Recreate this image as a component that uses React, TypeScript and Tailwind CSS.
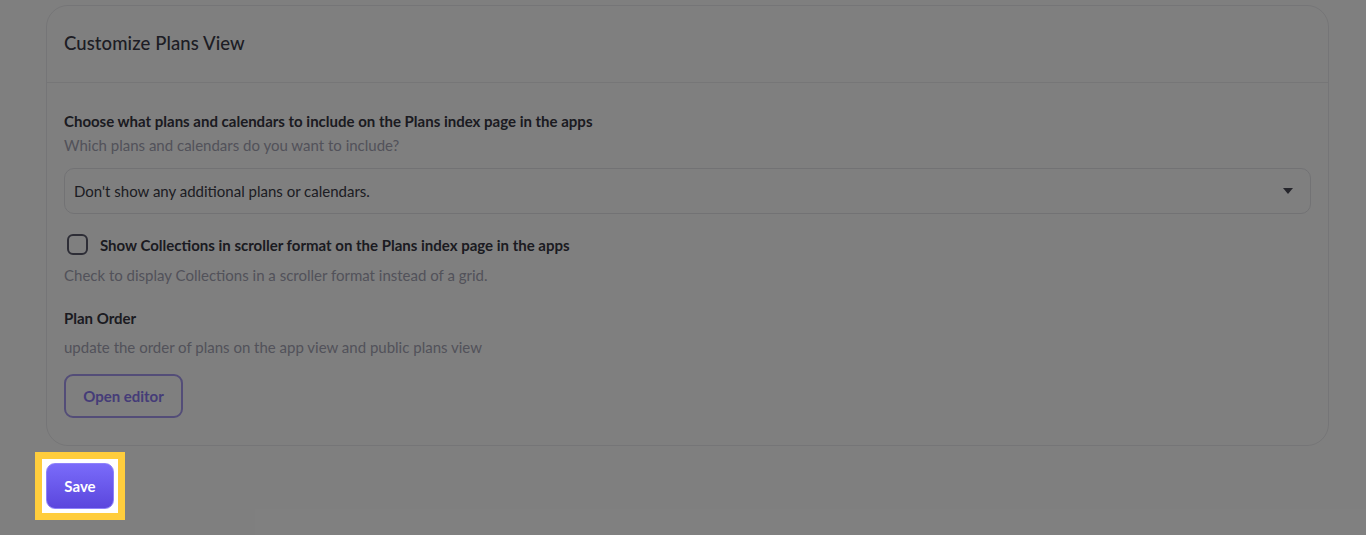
import { useState } from 'react';

export default function App() {
  const [scroller, setScroller] = useState(false);
  const [choice, setChoice] = useState('none');

  return (
    <div className="relative min-h-[535px] w-full bg-white pt-[5px] font-['Lato','Noto_Sans',sans-serif] text-[#1f1f2b]">
      <div className="ml-[46px] w-[1283px] rounded-[22px] border border-[#ebebee] bg-white">
        <div className="flex h-[77px] items-center border-b border-[#ececef] px-[17px]">
          <h2 className="text-[18.5px] font-medium tracking-[0.1px] text-[#3a3a48]">Customize Plans View</h2>
        </div>

        <div className="px-[17px] pt-[28px] pb-[27px]">
          <p className="text-[15px] leading-[20px] font-bold text-[#363642]">
            Choose what plans and calendars to include on the Plans index page in the apps
          </p>
          <p className="mt-[4px] text-[15px] leading-[20px] text-[#a4a4b4]">Which plans and calendars do you want to include?</p>

          <div className="relative mt-[13px]">
            <select
              value={choice}
              onChange={(e) => setChoice(e.target.value)}
              className="h-[46px] w-full appearance-none rounded-[10px] border border-[#e4e4e8] bg-white px-[9px] text-[15px] text-[#3a3a46] outline-none"
            >
              <option value="none">Don't show any additional plans or calendars.</option>
              <option value="all">Show all plans and calendars.</option>
            </select>
            <svg className="pointer-events-none absolute right-[18px] top-1/2 -translate-y-1/2" width="10" height="6" viewBox="0 0 10 6">
              <path d="M0 0h10L5 6z" fill="#4a4a56" />
            </svg>
          </div>

          <label className="mt-[20px] flex cursor-pointer items-center gap-[12px]">
            <input
              type="checkbox"
              checked={scroller}
              onChange={(e) => setScroller(e.target.checked)}
              className="ml-[3px] h-[21px] w-[21px] appearance-none rounded-[6px] border-2 border-[#5a5a6c] bg-white"
            />
            <span className="text-[15px] leading-[20px] font-bold text-[#363642]">
              Show Collections in scroller format on the Plans index page in the apps
            </span>
          </label>
          <p className="mt-[10px] text-[15px] leading-[20px] text-[#a4a4b4]">
            Check to display Collections in a scroller format instead of a grid.
          </p>

          <p className="mt-[23px] text-[15px] leading-[20px] font-bold text-[#363642]">Plan Order</p>
          <p className="mt-[9px] text-[15px] leading-[20px] text-[#a4a4b4]">update the order of plans on the app view and public plans view</p>

          <button className="mt-[17px] h-[44px] w-[119px] rounded-[9px] border-2 border-[#a79bf0] text-[15px] font-bold text-[#8a78f0]">
            Open editor
          </button>
        </div>
      </div>

      {/* tour overlay */}
      <div className="absolute inset-0 bg-black/50" />

      <div className="relative z-10 ml-[35px] mt-[6px] w-fit border-[7px] border-[#ffcd3c] bg-white p-[4px]">
        <button className="flex h-[46px] w-[68px] items-center justify-center rounded-[9px] border border-[#8f82fb] bg-gradient-to-b from-[#7a6bfa] to-[#5b46dd] text-[15px] font-bold text-white">
          Save
        </button>
      </div>
    </div>
  );
}
